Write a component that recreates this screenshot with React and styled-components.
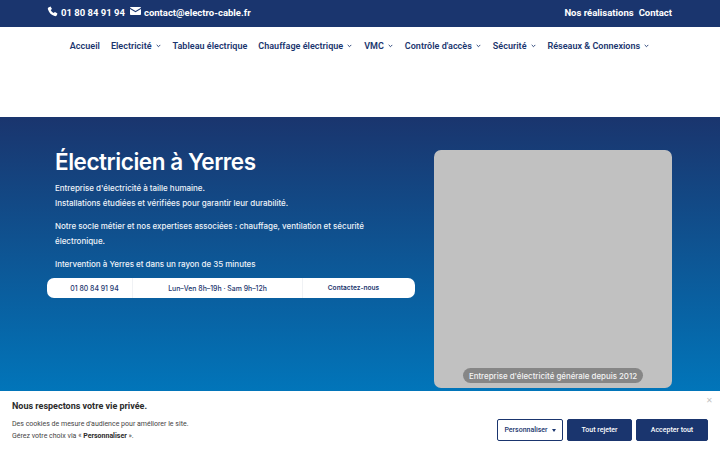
import React from "react";
import styled, { createGlobalStyle } from "styled-components";

const GlobalStyle = createGlobalStyle`
  html, body {
    margin: 0;
    padding: 0;
    height: 450px;
    overflow: hidden;
    background: #fff;
  }
  * { box-sizing: border-box; }
`;

const Page = styled.div`
  width: 720px;
  height: 450px;
  overflow: hidden;
  font-family: Roboto, "Liberation Sans", sans-serif;
`;

const TopBar = styled.div`
  height: 27px;
  background: #1a356e;
  padding: 0 48px 3px 47px;
  display: flex;
  justify-content: space-between;
  align-items: center;
  color: #fff;
  font-size: 9.5px;
  font-weight: 700;
`;

const TopGroup = styled.div`
  display: flex;
  align-items: center;
  gap: ${(p) => p.$gap}px;
`;

const TopItem = styled.span`
  display: flex;
  align-items: center;
  gap: 3px;
`;

const TopIcon = styled.svg`
  margin-bottom: ${(p) => p.$lift}px;
`;

const Nav = styled.nav`
  height: 90px;
  background: #fff;
  display: flex;
  justify-content: center;
  gap: 11px;
  padding: 13px 0 0;
  align-items: flex-start;
`;

const NavItem = styled.a`
  display: flex;
  align-items: center;
  gap: 4px;
  color: #1a356e;
  font-size: 9px;
  font-weight: 600;
  line-height: 12px;
  letter-spacing: 0.02px;
  white-space: nowrap;
`;

const Hero = styled.section`
  height: 333px;
  background: linear-gradient(180deg, #1a356e 0%, #0078bd 86%, #0078bd 100%);
  padding: 33px 48px 0 47px;
  display: flex;
  justify-content: space-between;
  align-items: flex-start;
`;

const HeroLeft = styled.div`
  width: 368px;
`;

const HeroText = styled.div`
  padding-left: 8px;
  color: #eef3f9;
  font-family: Inter, sans-serif;
  font-size: 8px;
  font-weight: 500;
  line-height: 15px;
  letter-spacing: -0.02px;
`;

const Title = styled.h1`
  margin: 0 0 7px;
  color: #fff;
  font-family: Inter, sans-serif;
  font-size: 22.5px;
  font-weight: 600;
  line-height: 24px;
  letter-spacing: -0.45px;
`;

const Para = styled.p`
  margin: 0 0 8px;
  &:last-child { margin-bottom: 0; }
`;

const ContactBar = styled.div`
  margin-top: 6px;
  height: 20px;
  padding: 0 11px 0 10px;
  background: #fff;
  border-radius: 7px;
  display: grid;
  grid-template-columns: 75px 170px 102px;
  align-items: stretch;
`;

const ContactCell = styled.div`
  display: flex;
  align-items: center;
  justify-content: center;
  color: #1a356e;
  font-family: Inter, sans-serif;
  font-size: ${(p) => (p.$strong ? 6.6 : 6.9)}px;
  font-weight: ${(p) => (p.$strong ? 600 : 500)};
  border-left: ${(p) => (p.$first ? "none" : "1px solid #f0f2f5")};
`;

const Photo = styled.div`
  position: relative;
  width: 238px;
  height: 238px;
  background: #c1c1c1;
  border-radius: 7px;
`;

const PhotoBadge = styled.span`
  position: absolute;
  left: 29px;
  bottom: 5px;
  width: 180px;
  height: 15px;
  border-radius: 8px;
  background: #868686;
  color: #f4f4f4;
  display: flex;
  align-items: center;
  justify-content: center;
  font-family: Inter, sans-serif;
  font-size: 7.9px;
  font-weight: 500;
  white-space: nowrap;
`;

const Cookie = styled.div`
  position: fixed;
  left: 0;
  right: 0;
  bottom: 0;
  height: 59px;
  background: #fff;
  padding: 9px 12px 0;
  display: flex;
  justify-content: space-between;
`;

const CookieTitle = styled.div`
  font-size: 9px;
  font-weight: 700;
  line-height: 12px;
  color: #2b2b2b;
  margin-bottom: 6px;
`;

const CookieText = styled.div`
  font-size: 7px;
  line-height: 12px;
  color: #444;
  strong { color: #2b2b2b; font-weight: 700; }
`;

const CookieActions = styled.div`
  display: flex;
  gap: 4px;
  padding-top: 19px;
  align-items: flex-start;
`;

const CookieButton = styled.button`
  height: 22px;
  width: ${(p) => p.$width}px;
  padding: 0;
  border-radius: 2px;
  font-family: Roboto, sans-serif;
  font-size: 7px;
  font-weight: 500;
  display: flex;
  align-items: center;
  justify-content: center;
  gap: 4px;
  background: ${(p) => (p.$outline ? "#fff" : "#1a356e")};
  color: ${(p) => (p.$outline ? "#1a356e" : "#fff")};
  border: 1px solid #1a356e;
`;

const Close = styled.span`
  position: absolute;
  top: 5px;
  right: 7px;
  color: #c4c4c4;
  font-size: 8px;
  line-height: 10px;
`;

const Caret = styled.span`
  width: 0;
  height: 0;
  border-left: 2.5px solid transparent;
  border-right: 2.5px solid transparent;
  border-top: 3px solid #1a356e;
`;

const ChevronSvg = styled.svg`
  margin-right: 1px;
`;

const Chevron = () => (
  <ChevronSvg width="5" height="4" viewBox="0 0 5 4" fill="none">
    <path d="M0.7 0.9 2.5 2.7 4.3 0.9" stroke="#1a356e" strokeWidth="0.9" />
  </ChevronSvg>
);

const PhoneIcon = () => (
  <TopIcon $lift={2} width="11" height="11" viewBox="0 0 24 24" fill="#fff">
    <path d="M6.6 1.5 3.2 3C1.8 3.7 1.6 5.5 2.2 7.4c2.3 7.2 7.2 12.1 14.4 14.4 1.9.6 3.7.4 4.4-1l1.5-3.4c.3-.6.1-1.2-.5-1.6l-3.8-2.4c-.6-.4-1.2-.3-1.7.2l-1.6 1.7c-2.900-1.300-5.500-3.900-6.800-6.800L10.200 6.900c.5-.5.6-1.100.2-1.700L8.200 2c-.4-.6-1-.8-1.600-.5z" />
  </TopIcon>
);

const MailIcon = () => (
  <TopIcon $lift={2} width="11" height="8" viewBox="0 0 11 8" fill="#fff">
    <path d="M.8 0h9.400c.4 0 .8.300.8.700L5.500 3.900 0 .7C0 .3.400 0 .8 0z" />
    <path d="M0 2 5.500 5.200 11 2v5.200c0 .4-.4.800-.8.800H.8C.4 8 0 7.600 0 7.200z" />
  </TopIcon>
);

const navItems = [
  ["Accueil", false],
  ["Electricité", true],
  ["Tableau électrique", false],
  ["Chauffage électrique", true],
  ["VMC", true],
  ["Contrôle d'accès", true],
  ["Sécurité", true],
  ["Réseaux & Connexions", true],
];

export default function App() {
  return (
    <Page>
      <GlobalStyle />
      <TopBar>
        <TopGroup $gap={5}>
          <TopItem>
            <PhoneIcon />
            01 80 84 91 94
          </TopItem>
          <TopItem>
            <MailIcon />
            contact@electro-cable.fr
          </TopItem>
        </TopGroup>
        <TopGroup $gap={5}>
          <TopItem>Nos réalisations</TopItem>
          <TopItem>Contact</TopItem>
        </TopGroup>
      </TopBar>
      <Nav>
        {navItems.map(([label, hasMenu]) => (
          <NavItem key={label}>
            {label}
            {hasMenu && <Chevron />}
          </NavItem>
        ))}
      </Nav>
      <Hero>
        <HeroLeft>
          <HeroText>
            <Title>Électricien à Yerres</Title>
            <Para>
              Entreprise d'électricité à taille humaine.
              <br />
              Installations étudiées et vérifiées pour garantir leur durabilité.
            </Para>
            <Para>
              Notre socle métier et nos expertises associées : chauffage, ventilation et sécurité
              électronique.
            </Para>
            <Para>Intervention à Yerres et dans un rayon de 35 minutes</Para>
          </HeroText>
          <ContactBar>
            <ContactCell $first>01 80 84 91 94</ContactCell>
            <ContactCell>Lun–Ven 8h–19h · Sam 9h–12h</ContactCell>
            <ContactCell $strong>Contactez-nous</ContactCell>
          </ContactBar>
        </HeroLeft>
        <Photo>
          <PhotoBadge>Entreprise d'électricité générale depuis 2012</PhotoBadge>
        </Photo>
      </Hero>
      <Cookie>
        <Close>✕</Close>
        <div>
          <CookieTitle>Nous respectons votre vie privée.</CookieTitle>
          <CookieText>
            Des cookies de mesure d'audience pour améliorer le site.
            <br />
            Gérez votre choix via « <strong>Personnaliser</strong> ».
          </CookieText>
        </div>
        <CookieActions>
          <CookieButton $outline $width={66}>
            Personnaliser <Caret />
          </CookieButton>
          <CookieButton $width={65}>Tout rejeter</CookieButton>
          <CookieButton $width={72}>Accepter tout</CookieButton>
        </CookieActions>
      </Cookie>
    </Page>
  );
}
